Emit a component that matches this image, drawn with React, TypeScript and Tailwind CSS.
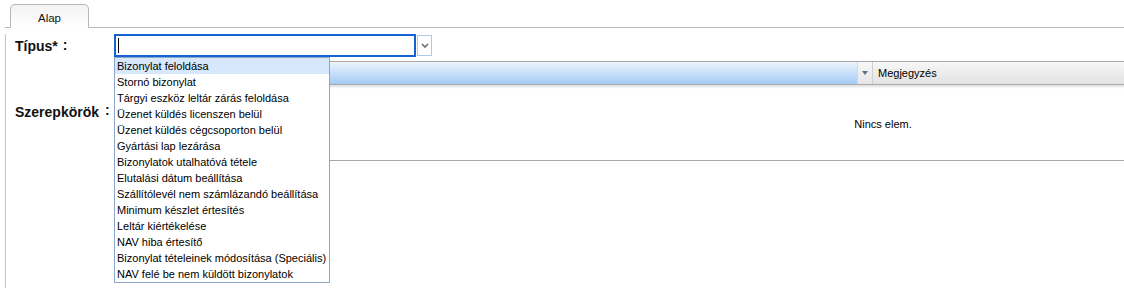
import React from "react";

const options = [
  "Bizonylat feloldása",
  "Stornó bizonylat",
  "Tárgyi eszköz leltár zárás feloldása",
  "Üzenet küldés licenszen belül",
  "Üzenet küldés cégcsoporton belül",
  "Gyártási lap lezárása",
  "Bizonylatok utalhatóvá tétele",
  "Elutalási dátum beállítása",
  "Szállítólevél nem számlázandó beállítása",
  "Minimum készlet értesítés",
  "Leltár kiértékelése",
  "NAV hiba értesítő",
  "Bizonylat tételeinek módosítása (Speciális)",
  "NAV felé be nem küldött bizonylatok",
];

const App = () => {
  return (
    <div className="relative h-[288px] w-[1124px] overflow-hidden bg-white font-['Liberation_Sans',Arial,sans-serif] text-[#111]">
      {/* tab bar */}
      <div className="ml-[5px] flex h-[28px] border-b border-[#b8b8b8] pl-[5px] pt-[4px]">
        <div className="-mb-px flex h-[24px] w-[79px] justify-center rounded-t-[5px] border border-b-0 border-[#b8b8b8] bg-gradient-to-b from-[#f3f3f3] to-white pt-[5px] text-[11.5px]">
          Alap
        </div>
      </div>

      <div className="ml-[5px] h-[260px] border-l border-[#c4c4c4]">
        {/* Típus row */}
        <div className="mt-[6px] flex items-center">
          <div className="w-[108px] shrink-0 pl-[9px] pt-px text-[14px] font-bold">
            Típus*<span className="relative -top-px ml-[5px]">:</span>
          </div>
          <div className="relative z-10 flex">
            <div className="flex h-[23px] w-[302px] items-center border-2 border-[#1462d6] bg-white pl-[2px]">
              <div className="h-[15px] w-px bg-black" />
            </div>
            <div className="ml-px mt-px flex h-[21px] w-[15px] items-center justify-center border border-[#a9cbef] bg-white">
              <svg width="8" height="5" viewBox="0 0 8 5">
                <polyline points="1,1 4,4 7,1" fill="none" stroke="#6b6b6b" strokeWidth="1.6" />
              </svg>
            </div>

            {/* dropdown list */}
            <div className="absolute left-0 top-[23px] w-[216px] border border-[#8ea6c6] bg-white">
              {options.map((o, i) => (
                <div
                  key={o}
                  className={`h-[16px] whitespace-nowrap pl-[2px] text-[11px] leading-[16px] text-black ${
                    i === 0 ? "bg-[#d7e8fc]" : ""
                  }`}
                >
                  {o}
                </div>
              ))}
            </div>
          </div>
        </div>

        {/* Szerepkörök row */}
        <div className="mt-[4px] flex items-center">
          <div className="w-[109px] shrink-0 pl-[9px] pt-[2px] text-[14px] font-bold">
            Szerepkörök<span className="relative -top-[2px] ml-[6px]">:</span>
          </div>
          <div className="w-[1536px] shrink-0">
            <div className="relative flex h-[24px] border-y border-[#a9a9a9] text-[11px] shadow-[0_2px_2px_rgba(0,0,0,0.12)]">
              <div className="w-[742px] bg-gradient-to-b from-[#eef4fb] to-[#a3cbf5]" />
              <div className="flex w-[16px] items-center justify-center border-x border-l-[#d8d8d8] border-r-[#cfcfcf] bg-gradient-to-b from-[#f8f8f8] to-[#e6e6e6]">
                <svg width="6" height="4" viewBox="0 0 6 4">
                  <polygon points="0,0 6,0 3,4" fill="#5f6f82" />
                </svg>
              </div>
              <div className="flex flex-1 items-center bg-gradient-to-b from-[#f7f7f7] to-[#e2e2e2] pl-[5px] text-black">
                Megjegyzés
              </div>
            </div>
            <div className="flex h-[76px] items-center justify-center border-b border-[#a9a9a9] pt-[3px] text-[11px] text-black">
              Nincs elem.
            </div>
          </div>
        </div>
      </div>
    </div>
  );
};

export default App;
